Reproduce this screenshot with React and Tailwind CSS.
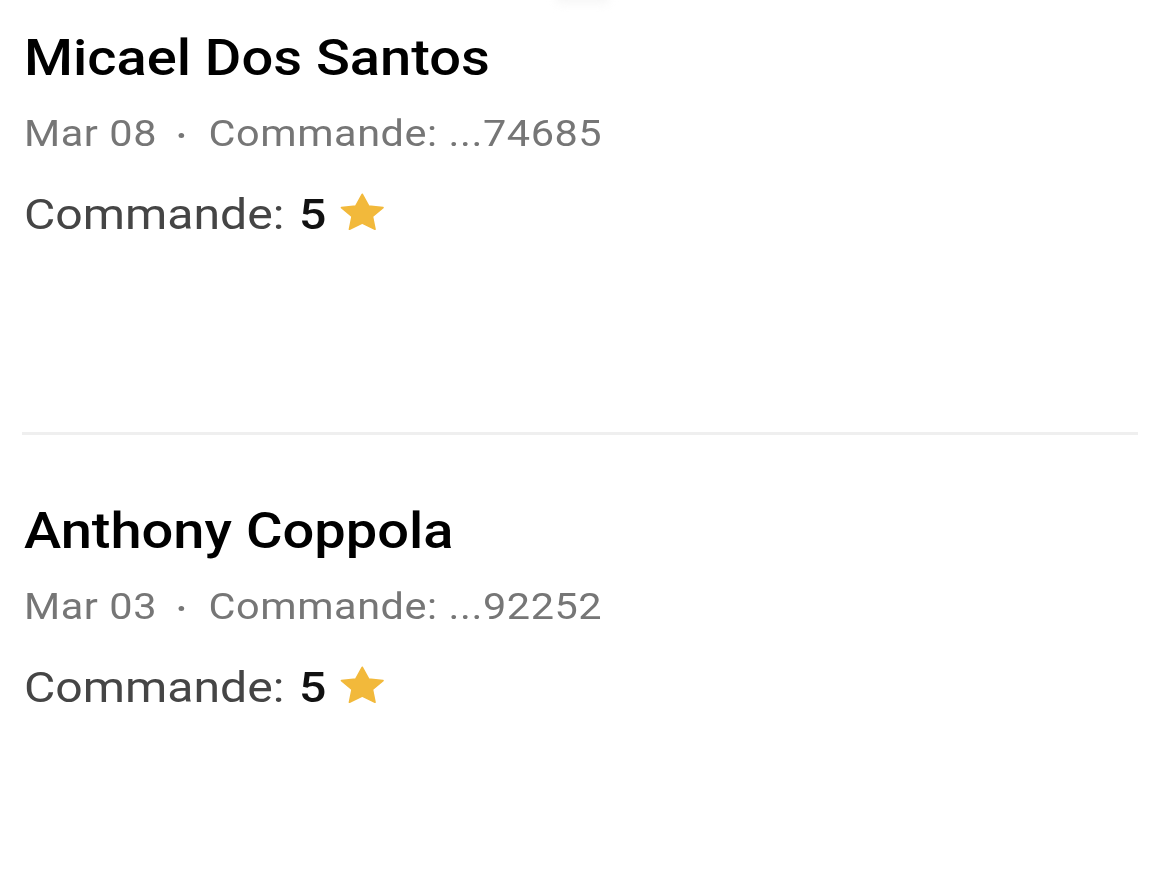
import React from "react";

function Star() {
  return (
    <svg width="46" height="46" viewBox="0 0 24 24" className="ml-[9px] shrink-0 -mt-[3px]">
      <path
        d="M12 2.2l2.95 6.1 6.7.9-4.9 4.65 1.2 6.65L12 17.3l-5.95 3.2 1.2-6.65-4.9-4.65 6.7-.9z"
        fill="#F2B93B"
        stroke="#F2B93B"
        strokeWidth="0.8"
        strokeLinejoin="round"
      />
    </svg>
  );
}

function Review({ name, date, order }) {
  return (
    <div className="px-[24px]">
      <div className="origin-left scale-x-[1.12] text-[50px] leading-[60px] font-medium text-black">
        {name}
      </div>
      <div className="mt-[24px] origin-left scale-x-[1.12] flex items-center text-[37px] leading-[44px] tracking-[0.5px] text-[#767676]">
        <span>{date}</span>
        <span className="ml-[19px] mr-[22px] mt-[2px] w-[5px] h-[5px] rounded-full bg-[#767676]" />
        <span>Commande: ...{order}</span>
      </div>
      <div className="mt-[33px] origin-left scale-x-[1.12] flex items-center text-[43px] leading-[50px] text-[#454545]">
        <span>Commande:</span>
        <span className="ml-[13px] font-medium text-[#111111]">5</span>
        <Star />
      </div>
    </div>
  );
}

export default function App() {
  return (
    <div
      className="w-[1160px] h-[880px] bg-white overflow-hidden relative"
      style={{ fontFamily: "Roboto, 'Noto Sans', sans-serif" }}
    >
      <div className="absolute left-[555px] top-[-10px] w-[55px] h-[14px] rounded-full bg-[#f7f7f7] blur-[4px]" />
      <div className="pt-[28px]">
        <Review name="Micael Dos Santos" date="Mar 08" order="74685" />
        <div className="h-[193px]" />
        <div className="mx-[22px] h-[3px] bg-[#efefef]" />
        <div className="h-[66px]" />
        <Review name="Anthony Coppola" date="Mar 03" order="92252" />
      </div>
    </div>
  );
}
